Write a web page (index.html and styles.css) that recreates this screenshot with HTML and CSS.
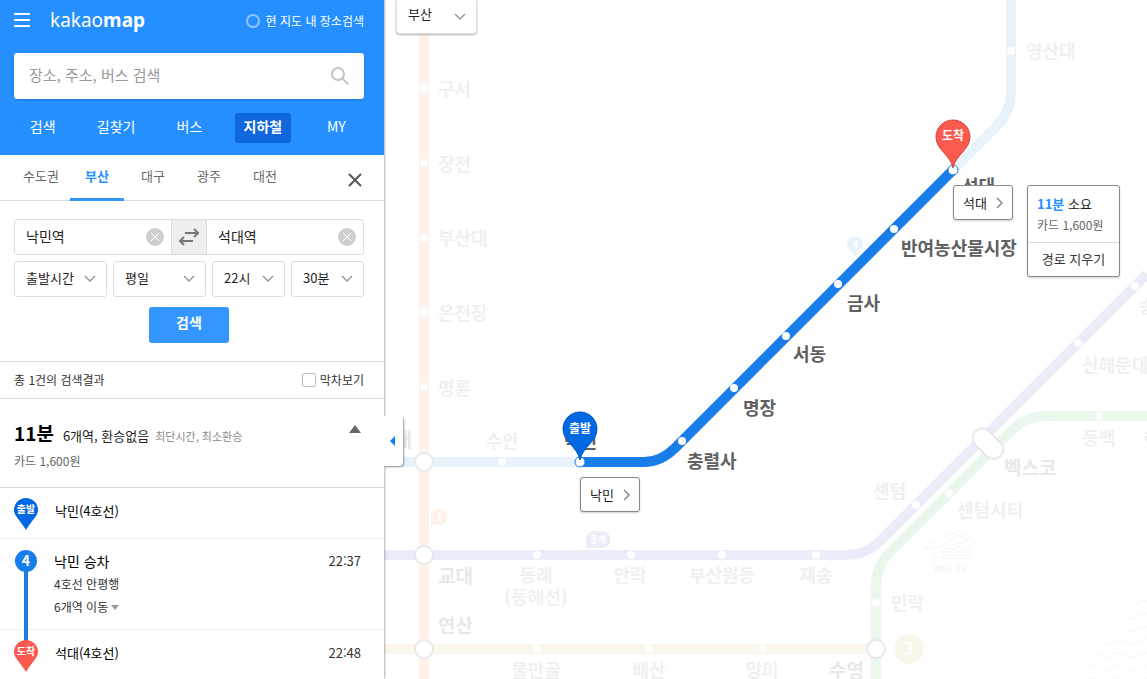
FILE: index.html
```
<!DOCTYPE html>
<html lang="ko">
<head>
    <meta charset="UTF-8">
    <meta name="viewport" content="width=device-width, initial-scale=1.0">
    <title>카카오맵 지하철</title>
    <link rel="stylesheet" href="styles.css">
</head>
<body>
    <div class="app">
        <aside class="sidebar">
            <header class="header">
                <div class="topbar">
                    <button type="button" class="menu-button" aria-label="메뉴">
                        <svg width="16" height="14" viewBox="0 0 16 14"><path d="M0 1h16M0 7h16M0 13h16" stroke="#fff" stroke-width="2"/></svg>
                    </button>
                    <a href="#" class="logo">kakao<b>map</b></a>
                    <label class="in-map"><input type="checkbox">현 지도 내 장소검색</label>
                </div>
                <form class="search-box">
                    <input type="text" placeholder="장소, 주소, 버스 검색" aria-label="장소 검색">
                    <button type="button" aria-label="검색">
                        <svg width="20" height="20" viewBox="0 0 20 20" fill="none" stroke="#c4c4c4" stroke-width="2"><circle cx="8" cy="8" r="6"/><path d="M12.500 12.500L18.500 18.500"/></svg>
                    </button>
                </form>
                <nav class="nav">
                    <a href="#">검색</a>
                    <a href="#">길찾기</a>
                    <a href="#">버스</a>
                    <a href="#" class="active">지하철</a>
                    <a href="#">MY</a>
                </nav>
            </header>

            <div class="tabs">
                <a href="#">수도권</a>
                <a href="#" class="active">부산</a>
                <a href="#">대구</a>
                <a href="#">광주</a>
                <a href="#">대전</a>
                <button type="button" class="close" aria-label="닫기">
                    <svg width="14" height="14" viewBox="0 0 14 14"><path d="M1 1l12 12M13 1L1 13" stroke="#555" stroke-width="2"/></svg>
                </button>
            </div>

            <form class="route-form">
                <div class="stations">
                    <div class="station">
                        <input type="text" value="낙민역" aria-label="출발역">
                        <button type="button" aria-label="출발역 지우기">
                            <svg width="18" height="18" viewBox="0 0 18 18"><circle cx="9" cy="9" r="9" fill="#cfcfcf"/><path d="M5 5l8 8M13 5l-8 8" stroke="#fff"/></svg>
                        </button>
                    </div>
                    <button type="button" class="swap" aria-label="출발 도착 바꾸기">
                        <svg width="20" height="18" viewBox="0 0 20 18" fill="none" stroke="#777" stroke-width="2"><path d="M6 5h13M15 1l4 4-4 4M14 13H1M5 9l-4 4 4 4"/></svg>
                    </button>
                    <div class="station">
                        <input type="text" value="석대역" aria-label="도착역">
                        <button type="button" aria-label="도착역 지우기">
                            <svg width="18" height="18" viewBox="0 0 18 18"><circle cx="9" cy="9" r="9" fill="#cfcfcf"/><path d="M5 5l8 8M13 5l-8 8" stroke="#fff"/></svg>
                        </button>
                    </div>
                </div>
                <div class="options">
                    <div class="select">
                        <select aria-label="시간 기준"><option>출발시간</option><option>도착시간</option></select>
                        <svg width="12" height="7" viewBox="0 0 12 7"><path d="M1 1l5 5 5-5"/></svg>
                    </div>
                    <div class="select">
                        <select aria-label="요일"><option>평일</option><option>토요일</option><option>휴일</option></select>
                        <svg width="12" height="7" viewBox="0 0 12 7"><path d="M1 1l5 5 5-5"/></svg>
                    </div>
                    <div class="select">
                        <select aria-label="시"><option>22시</option><option>23시</option></select>
                        <svg width="12" height="7" viewBox="0 0 12 7"><path d="M1 1l5 5 5-5"/></svg>
                    </div>
                    <div class="select">
                        <select aria-label="분"><option>30분</option><option>40분</option></select>
                        <svg width="12" height="7" viewBox="0 0 12 7"><path d="M1 1l5 5 5-5"/></svg>
                    </div>
                </div>
                <button type="button" class="submit">검색</button>
            </form>

            <div class="result-head">
                <span>총 1건의 검색결과</span>
                <label><input type="checkbox">막차보기</label>
            </div>

            <section class="summary">
                <div class="summary-title">
                    <h2>11분</h2>
                    <span class="stops">6개역, 환승없음</span>
                    <span class="tags">최단시간, 최소환승</span>
                    <button type="button" aria-label="접기">
                        <svg width="12" height="8" viewBox="0 0 12 8"><path d="M6 0l6 8H0z" fill="#666"/></svg>
                    </button>
                </div>
                <p>카드 1,600원</p>
            </section>

            <ol class="steps">
                <li class="step">
                    <svg class="pin" width="24" height="33" viewBox="0 0 24 33">
                        <path d="M12 0a12 12 0 0 1 12 12c0 6-6 10-12 20C6 22 0 18 0 12A12 12 0 0 1 12 0z" fill="#0068e0"/>
                        <text x="12" y="15">출발</text>
                    </svg>
                    <strong>낙민(4호선)</strong>
                </li>
                <li class="step ride">
                    <svg class="line-mark" width="24" height="24" viewBox="0 0 24 24">
                        <circle cx="12" cy="12" r="11" fill="#187de8"/>
                        <text x="12" y="17">4</text>
                    </svg>
                    <div class="ride-info">
                        <strong>낙민 승차</strong>
                        <span>4호선 안평행</span>
                        <button type="button">6개역 이동 <svg width="8" height="5" viewBox="0 0 8 5"><path d="M0 0h8L4 5z" fill="#999"/></svg></button>
                    </div>
                    <time>22:37</time>
                </li>
                <li class="step">
                    <svg class="pin" width="24" height="33" viewBox="0 0 24 33">
                        <path d="M12 0a12 12 0 0 1 12 12c0 6-6 10-12 20C6 22 0 18 0 12A12 12 0 0 1 12 0z" fill="#fb5b4f"/>
                        <text x="12" y="15">도착</text>
                    </svg>
                    <strong>석대(4호선)</strong>
                    <time>22:48</time>
                </li>
            </ol>
        </aside>

        <main class="map">
            <button type="button" class="fold" aria-label="패널 접기">
                <svg width="5" height="10" viewBox="0 0 5 10"><path d="M5 0v10L0 5z" fill="#0080ff"/></svg>
            </button>

            <svg class="lines" width="100%" height="100%">
                <defs>
                    <pattern id="waves" width="26" height="13" patternUnits="userSpaceOnUse">
                        <path d="M0 5q6-5 13 0t13 0" fill="none" stroke="#f6fbfd" stroke-width="2"/>
                    </pattern>
                </defs>
                <path d="M763 590L689 679H763z" fill="url(#waves)"/>

                <!-- 노선 -->
                <g class="track">
                    <path class="line1" d="M40 0V679"/>
                    <path class="line4" d="M0 462H196M569 170L611 128Q627 112 627 92V0"/>
                    <path class="line3" d="M0 649H492"/>
                    <path class="line2" d="M763 416H662Q642 416 628 430L506 552Q492 566 492 586V679"/>
                    <path class="donghae" d="M0 556Q4 555 8 555H462Q482 555 496 541L763 274"/>
                    <path class="route" d="M196 462H260Q277 462 291 448L569 170"/>
                </g>

                <!-- 일반역 -->
                <g class="stops-dots">
                    <circle cx="40" cy="88" r="4"/><circle cx="40" cy="163" r="4"/><circle cx="40" cy="238" r="4"/><circle cx="40" cy="312" r="4"/><circle cx="40" cy="387" r="4"/>
                    <circle cx="118" cy="462" r="4"/><circle cx="627" cy="51" r="4"/>
                    <circle cx="153" cy="555" r="4"/><circle cx="247" cy="555" r="4"/><circle cx="338" cy="555" r="4"/><circle cx="432" cy="555" r="4"/>
                    <circle cx="532" cy="505" r="4"/><circle cx="694" cy="343" r="4"/><circle cx="751" cy="286" r="4"/>
                    <circle cx="565" cy="493" r="4"/><circle cx="715" cy="416" r="4"/><circle cx="492" cy="603" r="4"/>
                    <circle cx="153" cy="649" r="4"/><circle cx="265" cy="649" r="4"/><circle cx="379" cy="649" r="4"/>
                    <circle cx="298" cy="441" r="4"/><circle cx="350" cy="388" r="4"/><circle cx="402" cy="336" r="4"/><circle cx="454" cy="284" r="4"/><circle cx="510" cy="229" r="4"/>
                </g>

                <!-- 환승역 -->
                <g class="transfer">
                    <circle cx="40" cy="462" r="9"/>
                    <circle cx="40" cy="555" r="9"/>
                    <circle cx="40" cy="649" r="9"/>
                    <circle cx="492" cy="649" r="9"/>
                    <rect x="587" y="434" width="35" height="19" rx="9" transform="rotate(45 604 443)"/>
                </g>

                <!-- 노선 번호 -->
                <path d="M47 525v-8a8 8 0 1 1 8 8z" fill="#fff1ea"/>
                <path d="M202 548v-9a8 8 0 0 1 8-8h8a8 8 0 0 1 0 17z" fill="#eaecf9"/>
                <path d="M471 256l-6-6a8 8 0 1 1 12 0z" fill="#e7f2fd"/>
                <circle cx="525" cy="649" r="15" fill="#fbf6eb"/>
                <g class="badge-text">
                    <text x="55" y="521" font-size="11">1</text>
                    <text x="214" y="543" font-size="9">동해</text>
                    <text x="471" y="249" font-size="11">4</text>
                    <text x="525" y="655" font-size="17">3</text>
                </g>

                <!-- 영화의 전당 -->
                <g class="landmark">
                    <path d="M539 550l9-8 28-11 15 11-13 9-6-7M539 550l19-4 17-11 8 5-11 4-14 2M557 551q8-6 17 0M556 552h31M558 555h26M560 552v6M578 552v6M546 558h41M547 555h5"/>
                    <text x="566" y="571">영화의 전당</text>
                </g>

                <g class="names">
                    <text x="54" y="96">구서</text>
                    <text x="54" y="171">장전</text>
                    <text x="54" y="245">부산대</text>
                    <text x="54" y="320">온천장</text>
                    <text x="54" y="395">명륜</text>
                    <text x="642" y="58">영산대</text>
                    <text x="698" y="372">신해운대</text>
                    <text x="755" y="313">송정</text>
                    <text x="760" y="445">해운대</text>
                    <text x="489" y="498">센텀</text>
                    <text x="573" y="517">센텀시티</text>
                    <text x="507" y="610">민락</text>
                </g>
                <g class="names centered">
                    <text x="118" y="448">수안</text>
                    <text x="152" y="582">동래</text>
                    <text x="152" y="604">(동해선)</text>
                    <text x="246" y="582">안락</text>
                    <text x="338" y="582">부산원동</text>
                    <text x="432" y="582">재송</text>
                    <text x="152" y="677">물만골</text>
                    <text x="265" y="677">배산</text>
                    <text x="378" y="677">망미</text>
                    <text x="715" y="445">동백</text>
                </g>
                <g class="names big">
                    <text x="-7" y="447">동래</text>
                    <text x="54" y="583">교대</text>
                    <text x="54" y="633">연산</text>
                    <text x="445" y="678">수영</text>
                    <text x="620" y="475">벡스코</text>
                </g>
                <g class="names on-route">
                    <text x="180" y="448">낙민</text>
                    <text x="303" y="468">충렬사</text>
                    <text x="359" y="415">명장</text>
                    <text x="409" y="361">서동</text>
                    <text x="463" y="310">금사</text>
                    <text x="517" y="255">반여농산물시장</text>
                    <text x="578" y="193">석대</text>
                </g>

                <!-- 출발 / 도착 -->
                <g class="ends">
                    <circle cx="196" cy="462" r="5"/>
                    <circle cx="569" cy="170" r="5"/>
                </g>
                <g class="markers">
                    <path d="M196 460C193 446 179 442 179 429a17 17 0 0 1 34 0c0 13-14 17-17 31z" fill="#0068e0" stroke="#0058c4"/>
                    <text x="196" y="433">출발</text>
                    <path d="M569 168C566 154 552 150 552 137a17 17 0 0 1 34 0c0 13-14 17-17 31z" fill="#fb5b4f" stroke="#d2463c"/>
                    <text x="569" y="140">도착</text>
                </g>
            </svg>

            <div class="select region">
                <select aria-label="지역"><option>부산</option><option>대구</option></select>
                <svg width="12" height="7" viewBox="0 0 12 7"><path d="M1 1l5 5 5-5"/></svg>
            </div>

            <a href="#" class="callout start">낙민 <svg width="7" height="12" viewBox="0 0 7 12"><path d="M1 1l5 5-5 5"/></svg></a>
            <a href="#" class="callout end">석대 <svg width="7" height="12" viewBox="0 0 7 12"><path d="M1 1l5 5-5 5"/></svg></a>

            <div class="route-info">
                <p class="time"><b>11분</b> 소요</p>
                <p class="fare">카드 1,600원</p>
                <button type="button">경로 지우기</button>
            </div>
        </main>
    </div>
</body>
</html>
```
FILE: styles.css
```
* {
    box-sizing: border-box;
}

body {
    margin: 0;
    font-family: "Noto Sans CJK KR", sans-serif;
    font-size: 12px;
    line-height: 18px;
    color: #333;
    background-color: #fff;
}

h2, p, ol {
    margin: 0;
    padding: 0;
}

a {
    color: inherit;
    text-decoration: none;
}

button, input, select {
    font-family: inherit;
    color: inherit;
    margin: 0;
}

button {
    padding: 0;
    border: none;
    background: none;
    cursor: pointer;
}

svg {
    display: block;
}

.app {
    display: flex;
    height: 100vh;
    overflow: hidden;
}

/* 왼쪽 패널 */
.sidebar {
    position: relative;
    z-index: 1;
    flex: 0 0 384px;
    background-color: #fff;
    box-shadow: 1px 0 2px rgba(0, 0, 0, 0.3);
}

.header {
    padding: 0 20px 12px 14px;
    background-color: #258fff;
    color: #fff;
}

.topbar {
    display: flex;
    align-items: center;
    height: 53px;
    padding-bottom: 14px;
}

.logo {
    margin-left: 20px;
    font-family: "Noto Sans", sans-serif;
    font-size: 19px;
    line-height: 24px;
}

.in-map {
    display: flex;
    align-items: center;
    gap: 6px;
    margin-left: auto;
    padding-top: 2px;
}

.in-map input {
    appearance: none;
    width: 14px;
    height: 14px;
    border: 2px solid #92c7ff;
    border-radius: 50%;
}

.search-box {
    display: flex;
    align-items: center;
    height: 46px;
    padding: 0 14px 0 15px;
    border-radius: 3px;
    background-color: #fff;
    box-shadow: 0 1px 2px rgba(0, 0, 0, 0.2);
}

.search-box input {
    flex: 1;
    min-width: 0;
    padding: 0 0 4px;
    border: none;
    outline: none;
    font-size: 15px;
    color: #333;
}

.search-box input::placeholder {
    color: #999;
}

.nav {
    display: grid;
    grid-template-columns: repeat(5, 1fr);
    justify-items: center;
    margin: 14px -9px 0 -8px;
    font-size: 14px;
    line-height: 26px;
}

.nav a {
    height: 30px;
    padding: 0 9px;
    border-radius: 3px;
}

.nav .active {
    background-color: #1066dd;
    font-weight: bold;
}

.tabs {
    display: flex;
    gap: 2px;
    height: 46px;
    padding: 0 22px 0 14px;
    border-bottom: 1px solid #ddd;
    font-size: 13px;
    line-height: 42px;
    text-align: center;
    color: #666;
}

.tabs a {
    width: 54px;
    height: 46px;
}

.tabs .active {
    border-bottom: 3px solid #3396ff;
    font-weight: bold;
    color: #258fff;
}

.close {
    margin: 4px 0 0 auto;
}

.route-form {
    padding: 18px 20px 18px 14px;
    border-bottom: 1px solid #ddd;
}

.stations {
    display: flex;
    height: 36px;
    border: 1px solid #ddd;
    border-radius: 3px;
}

.station {
    flex: 1;
    display: flex;
    align-items: center;
    padding: 0 7px 0 11px;
}

.station input {
    flex: 1;
    width: 0;
    height: 32px;
    padding: 0 0 2px;
    border: none;
    outline: none;
    background: none;
    font-size: 14px;
    color: #222;
}

.swap {
    display: flex;
    align-items: center;
    justify-content: center;
    width: 36px;
    border: solid #ddd;
    border-width: 0 1px;
    background-color: #eee;
}

.options {
    display: grid;
    grid-template-columns: 93fr 93fr 73fr 73fr;
    gap: 6px;
    margin: 6px 0 10px;
}

/* 화살표를 select 위에 겹쳐 놓음 */
.select {
    display: grid;
    align-items: center;
}

.select select,
.select svg {
    grid-area: 1 / 1;
}

.select select {
    appearance: none;
    width: 100%;
    height: 36px;
    padding: 0 0 4px 11px;
    border: 1px solid #ddd;
    border-radius: 3px;
    background-color: #fff;
    font-size: 13px;
    color: #222;
}

.select svg {
    justify-self: end;
    margin: 0 11px 2px 0;
    fill: none;
    stroke: #999;
    stroke-width: 1.5;
    pointer-events: none;
}

.submit {
    display: block;
    width: 80px;
    height: 36px;
    margin: 0 auto;
    padding-bottom: 6px;
    border-radius: 3px;
    background-color: #3396ff;
    font-size: 14px;
    font-weight: bold;
    color: #fff;
}

.result-head {
    display: flex;
    align-items: center;
    justify-content: space-between;
    height: 37px;
    padding: 0 20px 0 14px;
    border-bottom: 1px solid #ddd;
}

.result-head label {
    display: flex;
    align-items: center;
    gap: 4px;
}

.result-head input {
    appearance: none;
    width: 14px;
    height: 14px;
    border: 1px solid #bbb;
    border-radius: 2px;
    background-color: #fff;
}

.summary {
    height: 89px;
    padding: 20px 23px 0 14px;
    border-bottom: 1px solid #d5d5d5;
}

.summary-title {
    display: flex;
    align-items: baseline;
    line-height: 28px;
}

.summary-title h2 {
    font-size: 19px;
    color: #000;
}

.summary-title button {
    align-self: flex-start;
    margin: 6px 0 0 auto;
}

.stops {
    margin: 0 6px 0 9px;
    font-size: 13px;
    color: #222;
}

.tags {
    font-size: 11px;
    color: #888;
}

.summary p {
    margin-top: 2px;
    color: #666;
}

.steps {
    list-style: none;
    font-size: 13px;
}

.step {
    position: relative;
    display: flex;
    align-items: flex-start;
    height: 51px;
    padding: 10px 23px 0 14px;
    border-bottom: 1px solid #eee;
}

.step strong {
    margin: 4px 0 0 17px;
    font-weight: normal;
    color: #000;
}

.step time {
    margin: 4px 0 0 auto;
}

.pin {
    position: relative;
    z-index: 1;
}

.pin text,
.line-mark text {
    fill: #fff;
    font-size: 10px;
    font-weight: bold;
    text-anchor: middle;
}

.line-mark text {
    font-size: 14px;
}

.ride {
    height: 91px;
}

.ride strong,
.ride time {
    margin-top: 3px;
}

.ride strong {
    margin-left: 0;
    font-size: 14px;
}

/* 4호선 이동 구간 선 */
.ride::before {
    content: "";
    position: absolute;
    left: 24px;
    top: 30px;
    width: 4px;
    height: 76px;
    background-color: #187de8;
}

.ride-info {
    display: flex;
    flex-direction: column;
    align-items: flex-start;
    gap: 5px;
    margin-left: 16px;
    font-size: 12px;
}

.ride-info button {
    display: flex;
    align-items: center;
    gap: 3px;
    font-size: 12px;
    line-height: 18px;
}

/* 노선도 */
.map {
    position: relative;
    flex: 1;
    min-width: 0;
    overflow: hidden;
}

.fold {
    position: absolute;
    left: 0;
    top: 416px;
    z-index: 1;
    width: 19px;
    height: 50px;
    padding-left: 6px;
    border-radius: 0 4px 4px 0;
    background-color: #fff;
    box-shadow: 1px 1px 2px rgba(0, 0, 0, 0.4);
}

.track path {
    fill: none;
    stroke-width: 10;
}

.track .line1 { stroke: #fff1ea; }
.track .line2 { stroke: #eaf7ed; }
.track .line3 { stroke: #fbf6eb; }
.track .line4 { stroke: #e7f2fd; }
.track .donghae { stroke: #eaecf9; }
.track .route { stroke: #187de8; }

.stops-dots circle {
    fill: #fff;
}

.transfer circle,
.transfer rect {
    fill: #fff;
    stroke: #e8e8e8;
    stroke-width: 2;
}

.badge-text text {
    fill: #fff;
    font-weight: bold;
    text-anchor: middle;
}

.landmark path {
    fill: none;
    stroke: #f5f5f5;
}

.landmark text {
    fill: #f0f0f0;
    font-size: 7px;
    text-anchor: middle;
}

.names text {
    fill: #f0f0f0;
    font-size: 18px;
    font-weight: bold;
}

.centered text {
    text-anchor: middle;
}

.big text {
    fill: #e8e8e8;
    font-size: 19px;
}

.on-route text {
    fill: #606060;
}

.ends circle {
    fill: #fff;
    stroke: #187de8;
}

.markers text {
    fill: #fff;
    font-size: 12px;
    font-weight: bold;
    text-anchor: middle;
}

.region {
    position: absolute;
    left: 12px;
    top: 0;
    width: 81px;
}

.region select {
    height: 34px;
    padding-bottom: 6px;
    border-top: none;
    border-radius: 0 0 4px 4px;
    box-shadow: 0 1px 2px rgba(0, 0, 0, 0.3);
}

.callout {
    position: absolute;
    display: flex;
    align-items: center;
    justify-content: space-between;
    width: 60px;
    height: 35px;
    padding: 0 9px;
    border: 1px solid #888;
    border-radius: 3px;
    background-color: #fff;
    box-shadow: 0 1px 2px rgba(0, 0, 0, 0.2);
    font-size: 13px;
    color: #222;
}

.callout svg {
    fill: none;
    stroke: #888;
    stroke-width: 1.5;
}

.start {
    left: 196px;
    top: 477px;
}

.end {
    left: 569px;
    top: 185px;
}

.route-info {
    position: absolute;
    left: 643px;
    top: 185px;
    width: 93px;
    border: 1px solid #888;
    border-radius: 3px;
    background-color: #fff;
    box-shadow: 0 1px 2px rgba(0, 0, 0, 0.2);
}

.route-info p {
    padding-left: 9px;
}

.route-info .time {
    padding-top: 9px;
    font-size: 13px;
    color: #222;
}

.time b {
    color: #258fff;
}

.route-info .fare {
    padding: 3px 0 8px 9px;
    color: #666;
}

.route-info button {
    width: 100%;
    height: 34px;
    padding-bottom: 2px;
    border-top: 1px solid #ddd;
    font-size: 13px;
}
```
